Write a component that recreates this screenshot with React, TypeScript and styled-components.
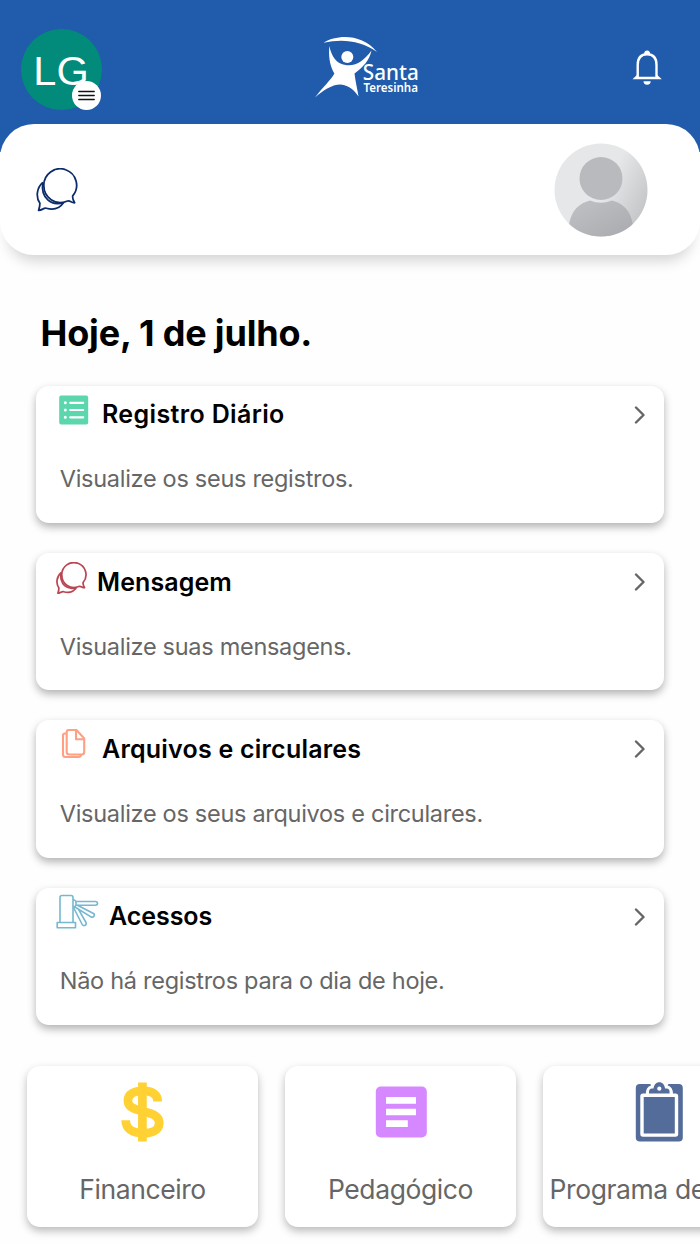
import React from "react";
import styled, { createGlobalStyle } from "styled-components";

const GlobalStyle = createGlobalStyle`
  * { box-sizing: border-box; }
  body {
    margin: 0;
    background: #fefefe;
    font-family: Inter, "Liberation Sans", sans-serif;
    overflow: hidden;
  }
  h1, h2, p { margin: 0; }
  svg { display: block; flex: none; }
`;

const Screen = styled.div`
  width: 700px;
  height: 1244px;
  overflow: hidden;
`;

const Header = styled.header`
  height: 151.6px;
  padding: 0 38.5px 28px 20.5px;
  background: #205cab;
  display: grid;
  grid-template-columns: 293.5px 110px 1fr;
  align-items: center;
`;

const ProfileButton = styled.button`
  position: relative;
  width: 81px;
  height: 81px;
  margin-top: 15px;
  padding: 0;
  border: 0;
  border-radius: 50%;
  background: #028a7b;
  color: #fff;
  font: 400 41.5px/83px "Liberation Sans", sans-serif;
`;

const MenuBadge = styled.span`
  position: absolute;
  right: 0.5px;
  bottom: 0;
  width: 29px;
  height: 29px;
  border-radius: 50%;
  background: #fff;
  display: flex;
  align-items: center;
  justify-content: center;
`;

const LogoSlot = styled.div`
  margin-top: 10px;
`;

const BellSlot = styled.div`
  justify-self: end;
  margin-top: 11px;
`;

const Panel = styled.section`
  height: 131.4px;
  margin-top: -28px;
  padding: 1px 52px 0 36px;
  border-radius: 34px;
  background: #fff;
  display: flex;
  align-items: center;
  justify-content: space-between;
  box-shadow: 0 14px 14px -8px rgba(0, 0, 0, 0.17);
  position: relative;
`;

const Today = styled.h1`
  margin: 55px 0 0 40.5px;
  height: 76px;
  font-size: 36px;
  line-height: 46px;
  font-weight: 700;
  letter-spacing: -0.18px;
  color: #000;
`;

const CardList = styled.main`
  padding: 0 36px;
  display: flex;
  flex-direction: column;
  gap: 30px;
`;

const Card = styled.article`
  height: 137.2px;
  padding: 6px 18px 0 20px;
  border-radius: 13px;
  background: #fff;
  box-shadow: 0 4px 8px rgba(0, 0, 0, 0.3);
`;

const CardHead = styled.div`
  display: flex;
  align-items: flex-start;
  height: 44px;
`;

const IconCell = styled.div<{ $width: number; $top?: number }>`
  width: ${(p) => p.$width}px;
  padding-top: ${(p) => p.$top ?? 0}px;
  flex: none;
`;

const CardTitle = styled.h2<{ $spacing: number }>`
  flex: 1;
  padding-top: 7.4px;
  font-size: 25px;
  line-height: 30px;
  font-weight: 600;
  letter-spacing: ${(p) => p.$spacing}px;
  color: #000;
`;

const ChevronCell = styled.div`
  padding-top: 14px;
`;

const CardText = styled.p`
  padding: 28.4px 0 0 3.8px;
  font-size: 23.5px;
  line-height: 30px;
  letter-spacing: -0.29px;
  color: #666;
  white-space: nowrap;
`;

const Tiles = styled.nav`
  display: flex;
  gap: 27px;
  padding: 41.4px 0 0 27px;
`;

const Tile = styled.div`
  flex: none;
  width: 231px;
  height: 161px;
  padding-top: 14px;
  border-radius: 13px;
  background: #fff;
  box-shadow: 0 4px 8px rgba(0, 0, 0, 0.27);
  display: flex;
  flex-direction: column;
  align-items: center;
`;

const TileLabel = styled.span<{ $start?: boolean }>`
  margin-top: 27.4px;
  align-self: ${(p) => (p.$start ? "flex-start" : "center")};
  padding-left: ${(p) => (p.$start ? 6.5 : 0)}px;
  font-size: 26.5px;
  line-height: 34px;
  letter-spacing: -0.4px;
  color: #666;
  white-space: nowrap;
`;

const Menu = () => (
  <svg width="17" height="11" viewBox="0 0 17 11" stroke="#111" strokeWidth="1.4" strokeLinecap="round">
    <path d="M.8 1.500h15.400M.8 5.500h15.400M.8 9.500h15.400" />
  </svg>
);

const Logo = () => (
  <svg width="110" height="64" viewBox="314 35 110 64" fill="#fff">
    <path d="M323.500 42.800C337 34.500 362 33.500 377 52C361 40.500 342 38.500 323.500 42.800Z" />
    <circle cx="347.300" cy="57" r="6" />
    <path d="M329.300 46C331.500 56 336 64.500 347 65.200C357 66 364.500 60 371.500 50.500C369.500 60 363.500 67 354.500 73.500C355.500 82 357.500 90 358.500 96.500C355 91 349.500 85.500 340.500 84.500C331.500 84.500 322.500 91 315 97.500C321.500 88.500 331.500 79.500 334.300 73.500C329.500 65 328.500 56 329.300 46Z" />
    <text x="362.800" y="79.600" fontFamily="Noto Sans, sans-serif" fontSize="22.500" fontWeight="500" textLength="56" lengthAdjust="spacingAndGlyphs">Santa</text>
    <text x="363.500" y="91.600" fontFamily="Noto Sans, sans-serif" fontSize="13" fontWeight="600" textLength="54.500" lengthAdjust="spacingAndGlyphs">Teresinha</text>
  </svg>
);

const Bell = () => (
  <svg width="30" height="35" viewBox="631.500 49.500 30 35" fill="none" stroke="#fff">
    <path d="M637.200 76.500V64.500C637.200 57 641 53.700 646.600 53.700S656 57 656 64.500V76.500" strokeWidth="2.400" />
    <path d="M632 78.700L637 74V76.300H656.200V74L661.300 78.700Z" fill="#fff" stroke="none" />
    <path d="M643.600 53.500a3 3.500 0 0 1 6 0ZM643 80.800h7.200a3.600 3.400 0 0 1-7.200 0Z" fill="#fff" stroke="none" />
  </svg>
);

const Bubbles = ({ size, color, weight }: { size: number; color: string; weight: number }) => (
  <svg width={size} height={size * 1.047} viewBox="0 0 43 45" fill="none" stroke={color} strokeWidth={weight} strokeLinejoin="round">
    <path d="M31.500 34C20 38.800 8 30.500 8 18A16.800 16.800 0 1 1 37.600 28.500Q37 31 39.500 35.600C36 35.800 35 32.700 31.500 34Z" />
    <path d="M7 14.800C4.500 31 16 39.500 28.300 35.300" />
    <path d="M7 14.800C.5 20.500-.3 30 4 36.200Q4 39.500 2.700 43.400C6.500 43.500 7.500 40.500 10.500 41.200C18.500 43.500 24.500 41 28.300 35.300" />
  </svg>
);

const Avatar = () => (
  <svg width="94" height="94" viewBox="0 0 94 94">
    <defs>
      <linearGradient id="avatarBack" x1="0" y1="0.200" x2="1" y2="0.700">
        <stop offset="0.550" stopColor="#e6e7e8" />
        <stop offset="1" stopColor="#c3c4c7" />
      </linearGradient>
      <linearGradient id="avatarBody" x1="0" y1="0" x2="1" y2="1">
        <stop offset="0.200" stopColor="#bcbdc0" />
        <stop offset="1" stopColor="#a9aaad" />
      </linearGradient>
      <clipPath id="avatarClip"><circle cx="47" cy="47" r="46.500" /></clipPath>
    </defs>
    <g clipPath="url(#avatarClip)">
      <rect width="94" height="94" fill="url(#avatarBack)" />
      <path d="M15 94V82C17 67 26 60 36 57.500Q47 62 58 57.500C69 60 77 68 79 82V94Z" fill="url(#avatarBody)" />
      <circle cx="47" cy="35.500" r="21.500" fill="#b9babd" />
    </g>
  </svg>
);

const Chevron = () => (
  <svg width="13" height="18" viewBox="0 0 13 18" fill="none" stroke="#666" strokeWidth="2.400" strokeLinecap="round" strokeLinejoin="round">
    <path d="M3 1.500L10.500 9L3 16.500" />
  </svg>
);

const ListIcon = () => (
  <svg width="36" height="36" viewBox="56 392 36 36">
    <rect x="59.200" y="395.500" width="29" height="29" rx="2" fill="#5cd6ad" />
    <g stroke="#fff" strokeWidth="2.200" strokeLinecap="round">
      <path d="M70.200 402.800h13M70.200 410h13M70.200 417.300h13" />
      <path d="M65.300 402.800h.01M65.300 410h.01M65.300 417.300h.01" strokeWidth="3" />
    </g>
  </svg>
);

const FilesIcon = () => (
  <svg width="36" height="36" viewBox="56 727 36 36" fill="none" stroke="#ffa085" strokeWidth="2.100" strokeLinejoin="round">
    <path d="M68.700 731H76.500L84.200 739.500V753Q84.200 755.500 81.700 755.500H69.200Q66.700 755.500 66.700 753V733Q66.700 731 68.700 731Z" />
    <path d="M76 731V740.200H84.200" />
    <path d="M66.700 734.500H65Q63 734.500 63 736.500V755.500Q63 758 65.500 758H78.500Q80.500 758 81.200 755.500" />
  </svg>
);

const GateIcon = () => (
  <svg width="44" height="38" viewBox="56 894 44 38" fill="none" stroke="#75b8cf" strokeWidth="1.600" strokeLinejoin="round">
    <path d="M60 922.500V897.500Q60 895.500 62 895.500H71Q73 895.500 73 897.500V922.500" />
    <path d="M57.200 922.500H75.500V927.700H57.200Z" />
    <path d="M73 900H74.500L76 901.500H95.500Q97.500 901.500 97.500 903.300T95.500 905.200H76L74.500 906.700H73" />
    <path d="M76 901.500V905.200M77.500 905.300L93.500 913.500C95.500 915 93.500 918 91 916.900L74.500 906.700M78.500 909.300L86 922.500C87 925 83.500 927 82.200 924.500L73.500 907.500" />
  </svg>
);

const Dollar = () => (
  <svg width="60" height="64" viewBox="112.800 1080 60 64" fill="none" stroke="#ffd133" strokeWidth="8.700">
    <path d="M142.200 1082.500V1141.500" />
    <path d="M157.500 1101.500C157.500 1094 151.500 1090.800 143 1090.800C134 1090.800 127.700 1094 127.700 1100.500C127.700 1106.500 132 1108.500 142.500 1111.300C153 1113.800 159 1116 159 1123C159 1130 152.500 1133.200 143 1133.200C132.500 1133.200 125.500 1129 125.500 1120.300" />
  </svg>
);

const Article = () => (
  <svg width="60" height="64" viewBox="371 1080 60 64">
    <rect x="375.800" y="1086.500" width="51" height="51" rx="5" fill="#d588ff" />
    <path d="M386 1097h30v6.700h-30zM386 1108.700h30v6.500h-30zM386 1120.200h21.800v6.700H386z" fill="#fff" />
  </svg>
);

const Clipboard = () => (
  <svg width="60" height="64" viewBox="629 1080 60 64">
    <rect x="635.800" y="1084" width="47" height="57.500" rx="4" fill="#546c99" />
    <rect x="642" y="1095.300" width="34.500" height="39.800" rx="1" fill="none" stroke="#fff" strokeWidth="3.400" />
    <path d="M649.500 1083H669.300L667.500 1085.300Q673 1087 673 1094H645.800Q645.800 1087 651.200 1085.300Z" fill="#fff" />
    <path d="M649 1093.600V1092Q649 1088.500 652 1088.500H653.500C654 1085 656 1082.300 659.300 1082.300S664.600 1085 665.100 1088.500H666.600Q669.600 1088.500 669.600 1092V1093.600Z" fill="#546c99" />
    <circle cx="659.300" cy="1088.700" r="2.100" fill="#fff" />
  </svg>
);

const cards = [
  { title: "Registro Diário", text: "Visualize os seus registros.", icon: <ListIcon />, cell: 46, top: 0, spacing: 0.36 },
  { title: "Mensagem", text: "Visualize suas mensagens.", icon: <Bubbles size={31} color="#b94653" weight={2.4} />, cell: 41, top: 2.4, spacing: 0.1 },
  { title: "Arquivos e circulares", text: "Visualize os seus arquivos e circulares.", icon: <FilesIcon />, cell: 46, top: 0, spacing: 0.22 },
  { title: "Acessos", text: "Não há registros para o dia de hoje.", icon: <GateIcon />, cell: 53, top: 0, spacing: -0.05 },
];

const tiles = [
  { label: "Financeiro", icon: <Dollar /> },
  { label: "Pedagógico", icon: <Article /> },
  { label: "Programa de", icon: <Clipboard />, start: true },
];

export default function App() {
  return (
    <Screen>
      <GlobalStyle />
      <Header>
        <ProfileButton>
          LG
          <MenuBadge><Menu /></MenuBadge>
        </ProfileButton>
        <LogoSlot><Logo /></LogoSlot>
        <BellSlot><Bell /></BellSlot>
      </Header>
      <Panel>
        <Bubbles size={42} color="#0b2b6b" weight={1.8} />
        <Avatar />
      </Panel>
      <Today>Hoje, 1 de julho.</Today>
      <CardList>
        {cards.map((card) => (
          <Card key={card.title}>
            <CardHead>
              <IconCell $width={card.cell} $top={card.top}>{card.icon}</IconCell>
              <CardTitle $spacing={card.spacing}>{card.title}</CardTitle>
              <ChevronCell><Chevron /></ChevronCell>
            </CardHead>
            <CardText>{card.text}</CardText>
          </Card>
        ))}
      </CardList>
      <Tiles>
        {tiles.map((tile) => (
          <Tile key={tile.label}>
            {tile.icon}
            <TileLabel $start={tile.start}>{tile.label}</TileLabel>
          </Tile>
        ))}
      </Tiles>
    </Screen>
  );
}
